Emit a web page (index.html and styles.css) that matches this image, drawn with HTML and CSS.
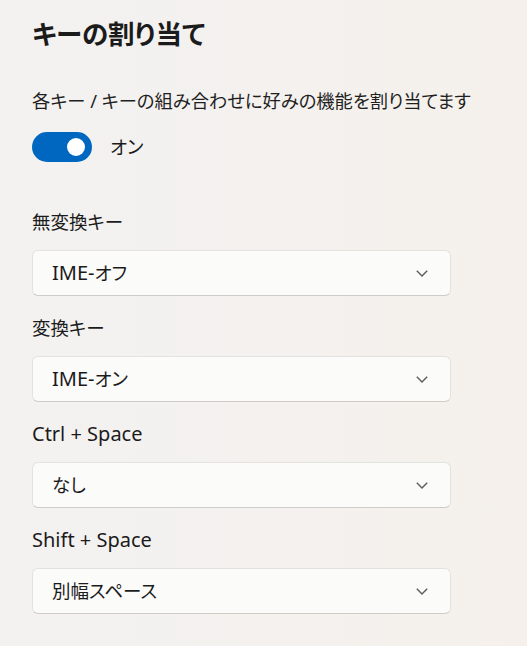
FILE: index.html
```html
<!DOCTYPE html>
<html lang="ja">
<head>
<meta charset="utf-8">
<title>キーの割り当て</title>
<link rel="stylesheet" href="styles.css">
</head>
<body>
<main class="page">
  <h1 class="title">キーの割り当て</h1>
  <p class="desc">各キー / キーの組み合わせに好みの機能を割り当てます</p>
  <div class="toggle-row">
    <span class="toggle"><span class="knob"></span></span>
    <span class="toggle-label">オン</span>
  </div>
  <div class="fields">
    <div class="field">
      <div class="field-label"><span class="jp">無変換キー</span></div>
      <div class="select"><span class="select-value">IME-<span class="jp">オフ</span></span><svg class="chevron" width="12" height="7" viewBox="0 0 12 7"><path d="M0.8 0.8 L6 6 L11.2 0.8" fill="none" stroke="#5c5c5c" stroke-width="1.4"/></svg></div>
    </div>
    <div class="field">
      <div class="field-label"><span class="jp">変換キー</span></div>
      <div class="select"><span class="select-value">IME-<span class="jp">オン</span></span><svg class="chevron" width="12" height="7" viewBox="0 0 12 7"><path d="M0.8 0.8 L6 6 L11.2 0.8" fill="none" stroke="#5c5c5c" stroke-width="1.4"/></svg></div>
    </div>
    <div class="field">
      <div class="field-label">Ctrl + Space</div>
      <div class="select"><span class="select-value"><span class="jp">なし</span></span><svg class="chevron" width="12" height="7" viewBox="0 0 12 7"><path d="M0.8 0.8 L6 6 L11.2 0.8" fill="none" stroke="#5c5c5c" stroke-width="1.4"/></svg></div>
    </div>
    <div class="field">
      <div class="field-label">Shift + Space</div>
      <div class="select"><span class="select-value"><span class="jp">別幅スペース</span></span><svg class="chevron" width="12" height="7" viewBox="0 0 12 7"><path d="M0.8 0.8 L6 6 L11.2 0.8" fill="none" stroke="#5c5c5c" stroke-width="1.4"/></svg></div>
    </div>
  </div>
</main>
</body>
</html>
```

FILE: styles.css
```css
html, body {
  margin: 0;
  height: 100%;
}
body {
  background: linear-gradient(90deg, #f3f2f1 0%, #f4f1ee 60%, #f5f0eb 100%);
  font-family: "Noto Sans", "Noto Sans CJK JP", sans-serif;
  font-feature-settings: "palt";
  color: #1b1b1b;
}
.page {
  padding: 14px 0 0 32px;
  width: 419px;
}
.title {
  margin: 0;
  font-size: 26.5px;
  font-weight: 700;
  line-height: 40px;
}
.desc {
  margin: 33px 0 0;
  font-size: 18.3px;
  line-height: 28px;
  white-space: nowrap;
  color: #1f1f1f;
}
.toggle-row {
  display: flex;
  align-items: center;
  gap: 18px;
  margin-top: 17px;
}
.toggle {
  display: flex;
  align-items: center;
  justify-content: flex-end;
  box-sizing: border-box;
  width: 60px;
  height: 30px;
  padding-right: 7px;
  border-radius: 15px;
  background: #0067c0;
}
.knob {
  width: 18px;
  height: 18px;
  border-radius: 50%;
  background: #ffffff;
}
.toggle-label {
  font-size: 18.5px;
  line-height: 28px;
}
.fields {
  display: flex;
  flex-direction: column;
  gap: 18px;
  margin-top: 46px;
}
.field {
  display: flex;
  flex-direction: column;
  gap: 14px;
}
.field-label {
  font-size: 20px;
  line-height: 28px;
}
.jp {
  font-size: 18.5px;
}
.select {
  display: flex;
  align-items: center;
  justify-content: space-between;
  box-sizing: border-box;
  height: 46px;
  padding: 0 22px 0 19px;
  background: #fbfbfa;
  border: 1px solid #e4e2df;
  border-bottom-color: #cfccc8;
  border-radius: 6px;
}
.select-value {
  font-size: 20px;
  line-height: 28px;
}
.chevron {
  display: block;
}
```
